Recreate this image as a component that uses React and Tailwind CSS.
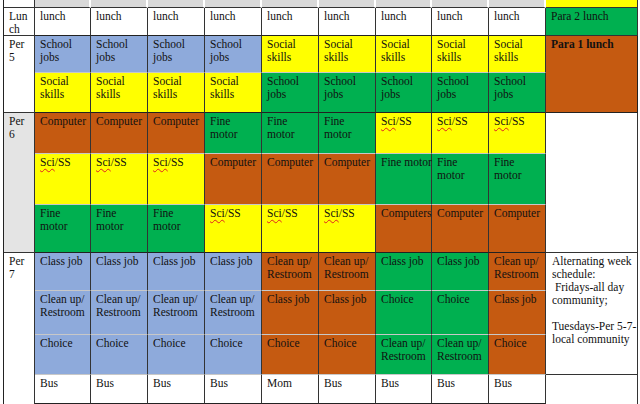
import React from 'react';

const BG = {
  B: 'bg-[#8eaadb]',
  Y: 'bg-[#ffff00]',
  G: 'bg-[#00b050]',
  O: 'bg-[#c55a11]',
  W: 'bg-white',
};

const Sci = () => (
  <span>
    <span className="underline decoration-wavy decoration-[#e02020] decoration-1 underline-offset-2">Sci</span>/SS
  </span>
);

const lines = {
  lunch: ['lunch'],
  school: ['School', 'jobs'],
  social: ['Social', 'skills'],
  comp: ['Computer'],
  comps: ['Computers'],
  fine: ['Fine', 'motor'],
  fine1: ['Fine motor'],
  sci: [<Sci key="s" />],
  cls: ['Class job'],
  clean: ['Clean up/', 'Restroom'],
  choice: ['Choice'],
  bus: ['Bus'],
  mom: ['Mom'],
};

// each row: [colour, text key] for the nine day columns
const rows = [
  { row: 'row-start-2', last: true, cells: Array(9).fill(['W', 'lunch']) },
  {
    row: 'row-start-3',
    cells: [['B', 'school'], ['B', 'school'], ['B', 'school'], ['B', 'school'], ['Y', 'social'], ['Y', 'social'], ['Y', 'social'], ['Y', 'social'], ['Y', 'social']],
  },
  {
    row: 'row-start-4',
    last: true,
    cells: [['Y', 'social'], ['Y', 'social'], ['Y', 'social'], ['Y', 'social'], ['G', 'school'], ['G', 'school'], ['G', 'school'], ['G', 'school'], ['G', 'school']],
  },
  {
    row: 'row-start-5',
    cells: [['O', 'comp'], ['O', 'comp'], ['O', 'comp'], ['G', 'fine'], ['G', 'fine'], ['G', 'fine'], ['Y', 'sci'], ['Y', 'sci'], ['Y', 'sci']],
  },
  {
    row: 'row-start-6',
    cells: [['Y', 'sci'], ['Y', 'sci'], ['Y', 'sci'], ['O', 'comp'], ['O', 'comp'], ['O', 'comp'], ['G', 'fine1'], ['G', 'fine'], ['G', 'fine']],
  },
  {
    row: 'row-start-7',
    last: true,
    cells: [['G', 'fine'], ['G', 'fine'], ['G', 'fine'], ['Y', 'sci'], ['Y', 'sci'], ['Y', 'sci'], ['O', 'comps'], ['O', 'comp'], ['O', 'comp']],
  },
  {
    row: 'row-start-8',
    cells: [['B', 'cls'], ['B', 'cls'], ['B', 'cls'], ['B', 'cls'], ['O', 'clean'], ['O', 'clean'], ['G', 'cls'], ['G', 'cls'], ['O', 'clean']],
  },
  {
    row: 'row-start-9',
    cells: [['B', 'clean'], ['B', 'clean'], ['B', 'clean'], ['B', 'clean'], ['O', 'cls'], ['O', 'cls'], ['G', 'choice'], ['G', 'choice'], ['O', 'cls']],
  },
  {
    row: 'row-start-10',
    cells: [['B', 'choice'], ['B', 'choice'], ['B', 'choice'], ['B', 'choice'], ['O', 'choice'], ['O', 'choice'], ['G', 'clean'], ['G', 'clean'], ['O', 'choice']],
  },
  {
    row: 'row-start-11',
    last: true,
    cells: [['W', 'bus'], ['W', 'bus'], ['W', 'bus'], ['W', 'bus'], ['W', 'mom'], ['W', 'bus'], ['W', 'bus'], ['W', 'bus'], ['W', 'bus']],
  },
];

const colStart = [
  'col-start-2', 'col-start-3', 'col-start-4', 'col-start-5', 'col-start-6',
  'col-start-7', 'col-start-8', 'col-start-9', 'col-start-10',
];

const Text = ({ items }) => (
  <div className="flex flex-col">
    {items.map((t, i) => (
      <span key={i} className="whitespace-nowrap">{t}</span>
    ))}
  </div>
);

export default function App() {
  return (
    <div className="w-[640px] h-[404px] overflow-hidden bg-white pl-[3px] font-['Liberation_Serif',serif] text-[11.5px] leading-[13px] text-[#111]">
      <div className="grid grid-cols-[31px_56px_57px_57px_57px_57px_57px_56px_57px_57px_92px] grid-rows-[8px_28px_37px_40px_41px_51px_48px_38px_44px_40px_29px] border-l border-[#222] w-[636px]">
        {/* header strip */}
        <div className="row-start-1 col-start-1 bg-white border-r border-b border-[#333]" />
        {colStart.map((c) => (
          <div key={c} className={`row-start-1 ${c} bg-[#d9d9d9] border-r-2 border-white border-b border-b-[#333]`} />
        ))}
        <div className="row-start-1 col-start-11 bg-[#ffff00] border-r border-b border-[#333]" />

        {/* period labels */}
        <div className="row-start-2 col-start-1 bg-white border-r border-b border-[#333] pl-[5px] pt-[2px]">
          Lun<br />ch
        </div>
        <div className="row-start-3 row-span-2 col-start-1 bg-white border-r border-b border-[#333] pl-[5px] pt-[2px]">
          Per<br />5
        </div>
        <div className="row-start-5 row-span-3 col-start-1 bg-[#e4e4e4] border-r border-b border-[#333] pl-[5px] pt-[2px]">
          Per<br />6
        </div>
        <div className="row-start-8 row-span-4 col-start-1 bg-white border-r border-[#333] pl-[5px] pt-[2px]">
          Per<br />7
        </div>

        {/* day cells */}
        {rows.map((r) =>
          r.cells.map(([c, k], i) => (
            <div
              key={`${r.row}-${i}`}
              className={`${r.row} ${colStart[i]} ${BG[c]} border-r border-[#333] border-b ${r.last ? 'border-b-[#222]' : 'border-b-[#c8c8c8]'} pl-[5px] pt-[2px]`}
            >
              <Text items={lines[k]} />
            </div>
          ))
        )}

        {/* notes column */}
        <div className="row-start-2 col-start-11 bg-[#00b050] border-r border-b border-[#333] pl-[5px] pt-[2px]">
          Para 2 lunch
        </div>
        <div className="row-start-3 row-span-2 col-start-11 bg-[#c55a11] border-r border-b border-[#222] pl-[5px] pt-[2px] font-bold">
          Para 1 lunch
        </div>
        <div className="row-start-5 row-span-3 col-start-11 bg-white border-r border-b border-[#333]" />
        <div className="row-start-8 row-span-3 col-start-11 bg-white border-r border-b border-[#333] pl-[6px] pt-[2px]">
          <div className="whitespace-nowrap">Alternating week</div>
          <div className="whitespace-nowrap">schedule:</div>
          <div className="whitespace-nowrap">&nbsp;Fridays-all day</div>
          <div className="whitespace-nowrap">community;</div>
          <div className="h-[13px]" />
          <div className="whitespace-nowrap">Tuesdays-Per 5-7-</div>
          <div className="whitespace-nowrap">local community</div>
        </div>
        <div className="row-start-11 col-start-11 bg-white border-r border-[#333]" />
      </div>
    </div>
  );
}
